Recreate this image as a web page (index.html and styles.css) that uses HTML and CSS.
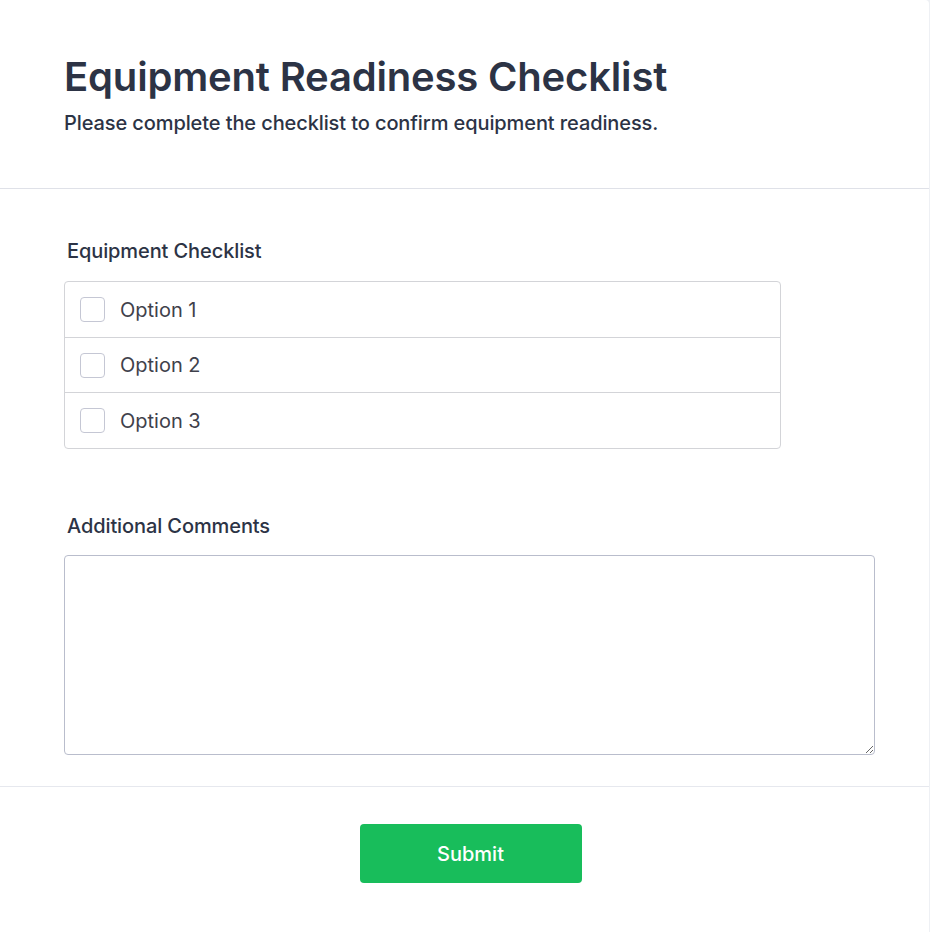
FILE: index.html
```html
<!DOCTYPE html>
<html lang="en">
<head>
<meta charset="utf-8">
<title>Equipment Readiness Checklist</title>
<link rel="stylesheet" href="styles.css">
</head>
<body>
<div class="card">
  <header class="head">
    <h1 class="title">Equipment Readiness Checklist</h1>
    <p class="subtitle">Please complete the checklist to confirm equipment readiness.</p>
  </header>
  <main class="body">
    <section class="field">
      <div class="label">Equipment Checklist</div>
      <div class="checklist">
        <label class="opt"><input type="checkbox" class="box"><span>Option 1</span></label>
        <label class="opt"><input type="checkbox" class="box"><span>Option 2</span></label>
        <label class="opt opt-last"><input type="checkbox" class="box"><span>Option 3</span></label>
      </div>
    </section>
    <section class="field field-comments">
      <div class="label">Additional Comments</div>
      <textarea class="comments"></textarea>
    </section>
  </main>
  <footer class="foot">
    <button class="submit" type="button">Submit</button>
  </footer>
</div>
</body>
</html>
```
FILE: styles.css
```css
* { box-sizing: border-box; }
html, body { margin: 0; padding: 0; }
body {
  background: #eef0f4;
  font-family: Inter, "Noto Sans", sans-serif;
  color: #2c3345;
}
.card {
  width: 929px;
  min-height: 932px;
  background: #fff;
  border-top-right-radius: 4px;
}
.head {
  padding: 53px 64px 0;
  height: 189px;
  border-bottom: 1px solid #dfe1e8;
}
.title {
  margin: 0;
  font-size: 40px;
  line-height: 48px;
  font-weight: 600;
  letter-spacing: -0.18px;
  color: #2c3345;
}
.subtitle {
  margin: 9px 0 0;
  font-size: 20px;
  line-height: 26px;
  font-weight: 500;
  letter-spacing: -0.1px;
  color: #2c3345;
}
.body {
  padding: 49px 55px 31px 64px;
  border-bottom: 1px solid #e6e8ee;
}
.label {
  font-size: 20px;
  line-height: 26px;
  font-weight: 500;
  letter-spacing: -0.1px;
  color: #2c3345;
  padding-left: 3px;
  margin-bottom: 17px;
}
.checklist {
  width: 717px;
  border: 1px solid #d3d4d8;
  border-radius: 4px;
}
.opt {
  display: flex;
  align-items: center;
  gap: 15px;
  height: 55px;
  padding-left: 15px;
  font-size: 20px;
  color: #3f414b;
}
.opt + .opt { border-top: 1px solid #d3d4d8; }
.opt-last { height: 56px; }
.box {
  appearance: none;
  -webkit-appearance: none;
  margin: 0;
  width: 25px;
  height: 25px;
  border: 1px solid #c5c7d4;
  border-radius: 4px;
  background: #fff;
}
.field-comments { margin-top: 64px; }
.field-comments .label { margin-bottom: 16px; }
.comments {
  display: block;
  width: 811px;
  height: 200px;
  border: 1px solid #b9bdcc;
  border-radius: 4px;
  resize: vertical;
  font-family: inherit;
}
.foot {
  display: flex;
  justify-content: center;
  padding-top: 37px;
}
.submit {
  width: 222px;
  height: 59px;
  border: 0;
  border-radius: 4px;
  background: #18bd5b;
  color: #fff;
  font-family: Inter, sans-serif;
  font-size: 20px;
  font-weight: 500;
  margin-left: 12px;
}
```
